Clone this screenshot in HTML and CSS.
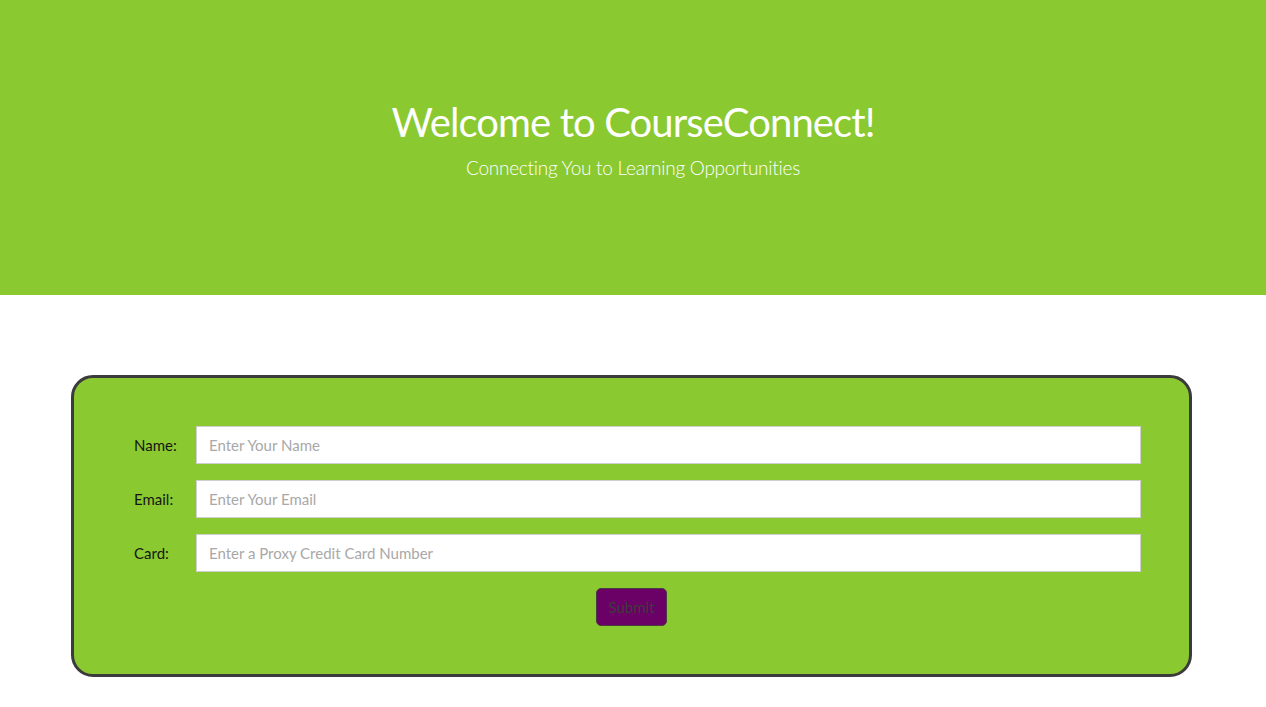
FILE: index.html
```html
<!DOCTYPE html>
<html lang="en">
<head>
<meta charset="utf-8">
<title>CourseConnect</title>
<link rel="stylesheet" href="styles.css">
</head>
<body>
<header class="hero">
  <h1 class="hero-title">Welcome to CourseConnect!</h1>
  <p class="hero-sub">Connecting You to Learning Opportunities</p>
</header>
<main class="main">
  <form class="card">
    <div class="row">
      <label class="label" for="name">Name:</label>
      <input class="input" id="name" type="text" placeholder="Enter Your Name">
    </div>
    <div class="row">
      <label class="label" for="email">Email:</label>
      <input class="input" id="email" type="text" placeholder="Enter Your Email">
    </div>
    <div class="row">
      <label class="label" for="card">Card:</label>
      <input class="input" id="card" type="text" placeholder="Enter a Proxy Credit Card Number">
    </div>
    <div class="actions">
      <button class="submit" type="button">Submit</button>
    </div>
  </form>
</main>
</body>
</html>
```
FILE: styles.css
```css
* { box-sizing: border-box; }
html, body { margin: 0; padding: 0; background: #ffffff; }
body { font-family: "Lato", "Open Sans", sans-serif; }

.hero {
  background: #8ac930;
  height: 295px;
  display: flex;
  flex-direction: column;
  align-items: center;
  padding-top: 97px;
  color: #ffffff;
}
.hero-title {
  margin: 0;
  font-size: 40px;
  font-weight: 400;
  line-height: 50px;
  letter-spacing: -0.9px;
}
.hero-sub {
  margin: 9px 0 0;
  font-size: 19px;
  font-weight: 300;
  line-height: 24px;
  letter-spacing: -0.25px;
}

.main {
  padding: 80px 74px 30px 71px;
}
.card {
  background: #8ac930;
  border: 3px solid #3b3b3b;
  border-radius: 22px;
  padding: 48px 48px 48px 60px;
  display: flex;
  flex-direction: column;
  gap: 16px;
}
.row {
  display: flex;
  align-items: center;
}
.label {
  width: 62px;
  flex: none;
  font-size: 15px;
  color: #161616;
}
.input {
  flex: 1;
  height: 38px;
  border: 1px solid #cfcfcf;
  background: #ffffff;
  padding: 0 12px;
  font-family: inherit;
  font-size: 15px;
  color: #333;
  outline: none;
}
.input::placeholder { color: #a8a8a8; }
.actions {
  display: flex;
  justify-content: center;
  padding-right: 12px;
}
.submit {
  width: 71px;
  height: 38px;
  background: #6b0066;
  border: 1px solid #4a3a44;
  border-radius: 5px;
  color: #3d3d3d;
  font-family: inherit;
  font-size: 15px;
  padding: 0;
}
```
